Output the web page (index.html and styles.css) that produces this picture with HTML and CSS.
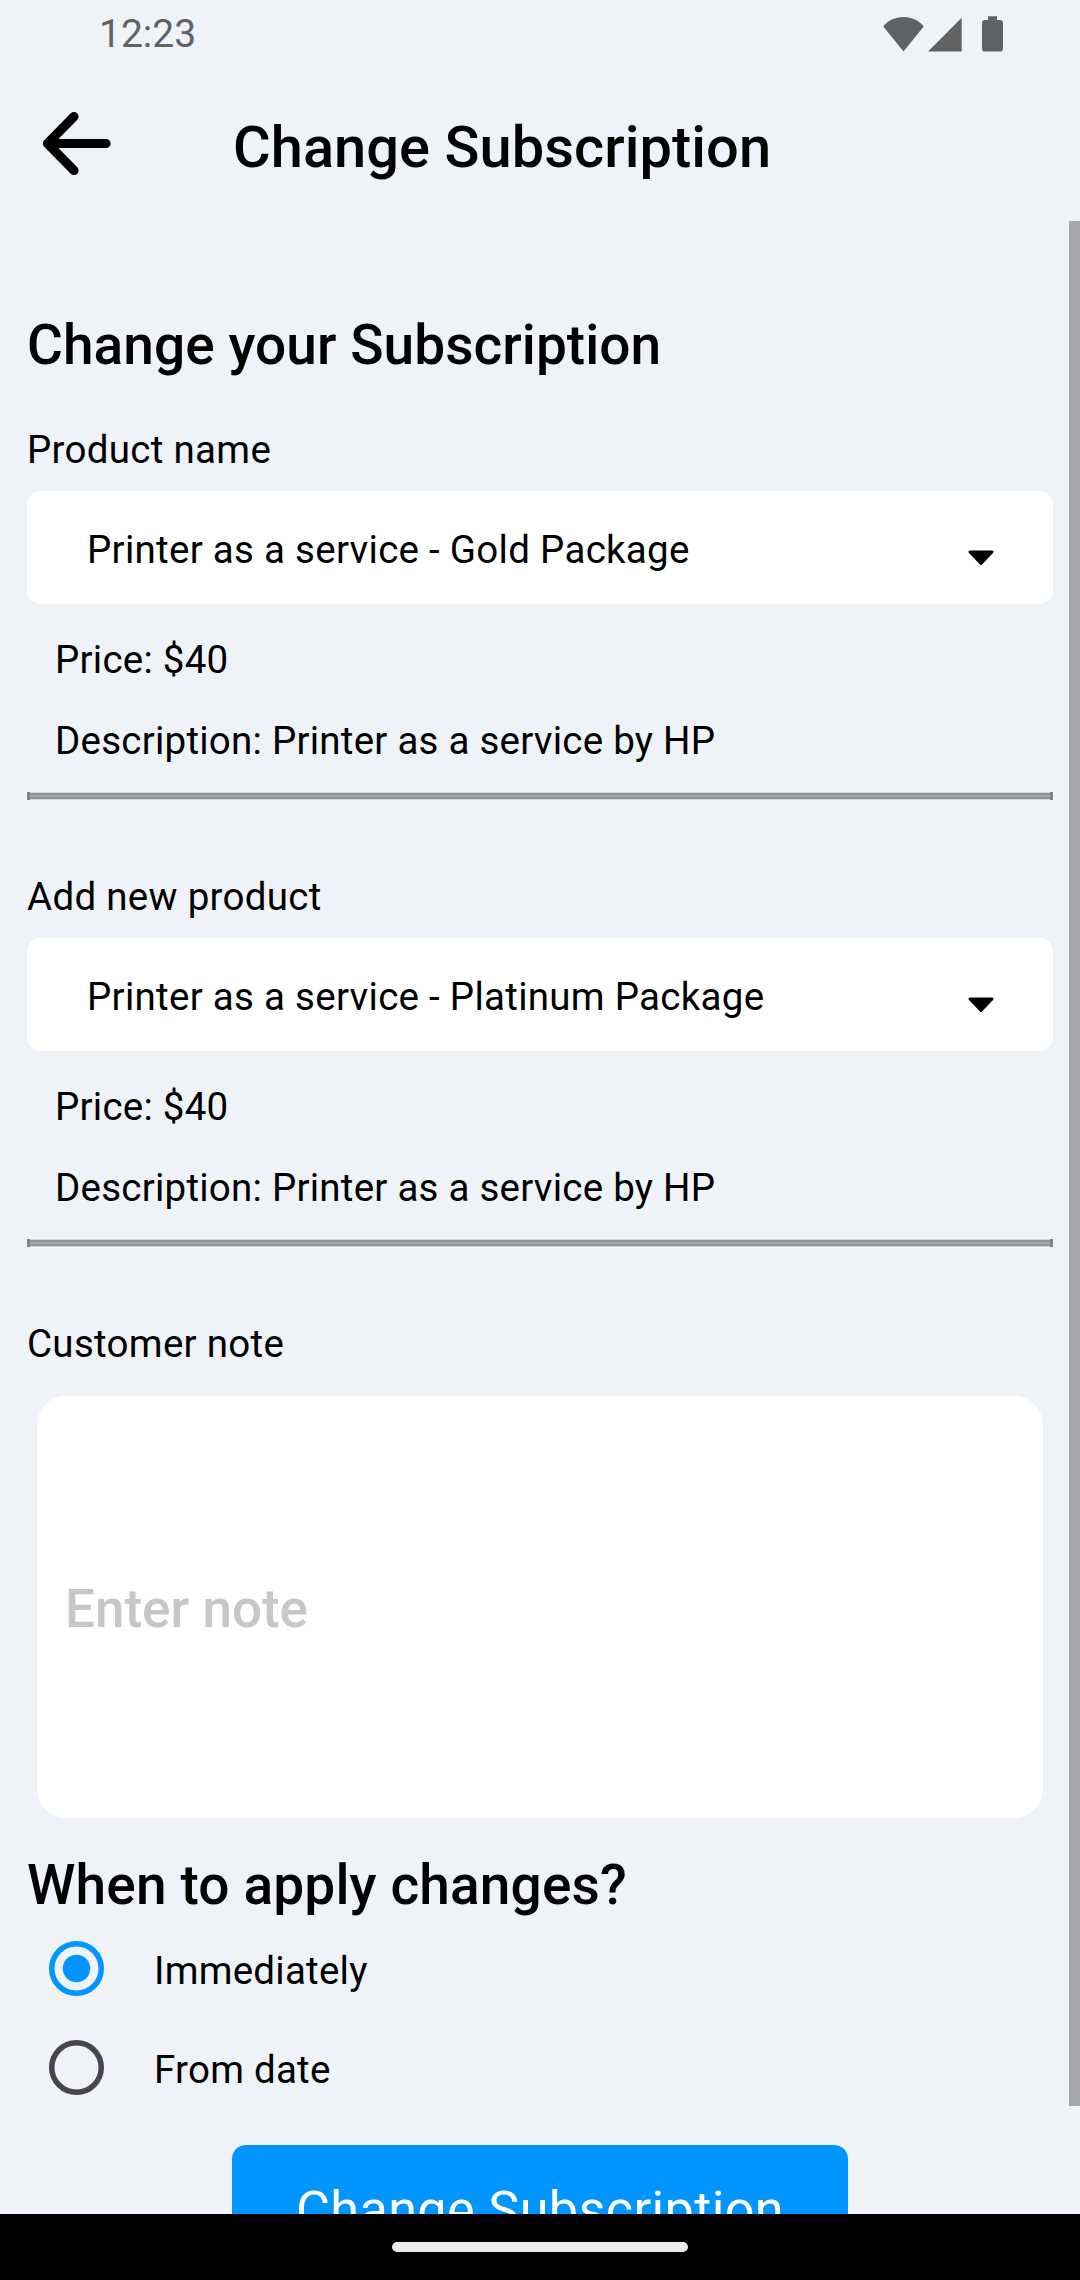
FILE: index.html
```html
<!DOCTYPE html>
<html lang="en">
<head>
<meta charset="utf-8">
<title>Change Subscription</title>
<link rel="stylesheet" href="styles.css">
</head>
<body>
<div class="screen">
  <div class="status-bar">
    <span class="clock">12:23</span>
    <svg class="status-icons" width="121" height="38" viewBox="0 0 121 38" aria-hidden="true">
      <path d="M0.3 11.5C5 5.500 12 2 20.500 2S36 5.500 40.700 11.500L20.500 36.500Z"/>
      <path d="M78.700 2.800V36.600H45Z"/>
      <path d="M105 1.300H114V5H117Q120 5 120 8V33.500Q120 36.600 117 36.600H102Q99 36.600 99 33.500V8Q99 5 102 5H105Z"/>
    </svg>
  </div>
  <header class="app-bar">
    <svg class="back" width="70" height="66" viewBox="0 0 70 66" aria-label="Back">
      <path d="M33 5.500L6.500 32.500L33 59.500M7 32.500H65" fill="none" stroke="#000" stroke-width="9.200" stroke-linecap="round" stroke-linejoin="round"/>
    </svg>
    <h1 class="title">Change Subscription</h1>
  </header>
  <main class="content">
    <h2 class="heading">Change your Subscription</h2>
    <section class="product">
      <div class="label">Product name</div>
      <div class="select">
        <span>Printer as a service - Gold Package</span>
        <svg class="caret" width="26" height="16" viewBox="0 0 26 16" aria-hidden="true"><path d="M2 .5H24Q26.500 1 25 3L14 14.500Q13 15.500 12 14.500L1 3Q-.5 1 2 .5Z"/></svg>
      </div>
      <div class="detail">Price: $40</div>
      <div class="detail">Description: Printer as a service by HP</div>
      <div class="divider"></div>
    </section>
    <section class="product">
      <div class="label">Add new product</div>
      <div class="select">
        <span>Printer as a service - Platinum Package</span>
        <svg class="caret" width="26" height="16" viewBox="0 0 26 16" aria-hidden="true"><path d="M2 .5H24Q26.500 1 25 3L14 14.500Q13 15.500 12 14.500L1 3Q-.5 1 2 .5Z"/></svg>
      </div>
      <div class="detail">Price: $40</div>
      <div class="detail">Description: Printer as a service by HP</div>
      <div class="divider"></div>
    </section>
    <div class="label">Customer note</div>
    <div class="note">Enter note</div>
    <h2 class="heading question">When to apply changes?</h2>
    <div class="options">
      <div class="option">
        <svg class="radio radio-on" width="55" height="55" viewBox="0 0 55 55" aria-hidden="true"><circle class="ring" cx="27.5" cy="27.5" r="24.750"/><circle class="dot" cx="27.5" cy="27.5" r="13.750"/></svg>
        <span>Immediately</span>
      </div>
      <div class="option">
        <svg class="radio" width="55" height="55" viewBox="0 0 55 55" aria-hidden="true"><circle class="ring" cx="27.5" cy="27.5" r="24.750"/></svg>
        <span>From date</span>
      </div>
    </div>
    <div class="submit">Change Subscription</div>
    <div class="scrollbar"></div>
  </main>
  <footer class="nav-bar"><div class="pill"></div></footer>
</div>
</body>
</html>
```
FILE: styles.css
```css
* { box-sizing: border-box; }
body {
  margin: 0;
  background: #eff3f8;
  color: #000;
  font: 400 38.5px/46px Roboto, "Noto Sans", sans-serif;
}
h1, h2 { margin: 0; font-weight: 500; }
.screen {
  display: flex;
  flex-direction: column;
  width: 1080px;
  height: 2280px;
  overflow: hidden;
}
.status-bar {
  display: flex;
  justify-content: space-between;
  height: 66px;
  padding: 11px 76px 0 99px;
  color: #616263;
}
.clock { font-size: 39px; }
.status-icons { margin-top: 4px; fill: #616263; }
.app-bar {
  display: flex;
  flex: none;
  height: 155px;
  padding: 45px 0 0 41px;
}
.title {
  margin: 4px 0 0 122px;
  font-size: 57.75px;
  line-height: 64px;
  letter-spacing: .06px;
}
.content {
  position: relative;
  flex: none;
  height: 1993px;
  padding: 92px 27px 0;
  overflow: hidden;
}
.heading {
  font-size: 55px;
  line-height: 64px;
  letter-spacing: .06px;
}
.question { letter-spacing: .15px; }
.product {
  height: 397px;
  margin-top: 50px;
}
.label { letter-spacing: .3px; }
.select {
  display: flex;
  justify-content: space-between;
  height: 113px;
  margin: 18px 0 33px;
  padding: 36px 59px 0 60px;
  border-radius: 14px;
  background: #fff;
  letter-spacing: .28px;
}
.caret { margin-top: 23px; }
.detail {
  height: 81px;
  padding-left: 28px;
  letter-spacing: .24px;
}
/* ridge line: two dark strokes round a lighter core, with dark end caps */
.divider {
  height: 8px;
  margin-top: -7px;
  border-left: 3px solid #808184;
  border-right: 3px solid #808184;
  background: linear-gradient(#d3d6da 1px, #929397 1px 3px, #a5a6aa 3px 5px, #929397 5px 7px, #d3d6da 7px);
}
.product + .label { margin-top: 50px; }
.note {
  height: 422px;
  margin: 29px 10px 35px;
  padding: 181px 28px 0;
  border-radius: 29px;
  background: #fff;
  color: #c7c7c7;
  font-size: 53px;
  font-weight: 500;
  line-height: 64px;
}
.options {
  display: grid;
  gap: 44px;
  margin: 24px 0 50px 22px;
}
.option {
  display: flex;
  gap: 50px;
  height: 55px;
  line-height: 60px;
  letter-spacing: .24px;
}
.ring {
  fill: none;
  stroke: #49454f;
  stroke-width: 5.5px;
}
.radio-on .ring { stroke: #0095ff; }
.dot { fill: #0095ff; }
.submit {
  width: 616px;
  height: 134px;
  margin: 0 auto;
  padding-top: 34px;
  border-radius: 14px;
  background: #0095ff;
  color: #fff;
  font-size: 52.25px;
  line-height: 64px;
  letter-spacing: .33px;
  text-align: center;
}
.scrollbar {
  position: absolute;
  top: 0;
  right: 0;
  width: 11px;
  height: 1885px;
  background: #a7a8ac;
}
.nav-bar {
  display: flex;
  flex: none;
  justify-content: center;
  height: 66px;
  padding-top: 28px;
  background: #000;
}
.pill {
  width: 296px;
  height: 10px;
  border-radius: 5px;
  background: #ebebeb;
}
```
